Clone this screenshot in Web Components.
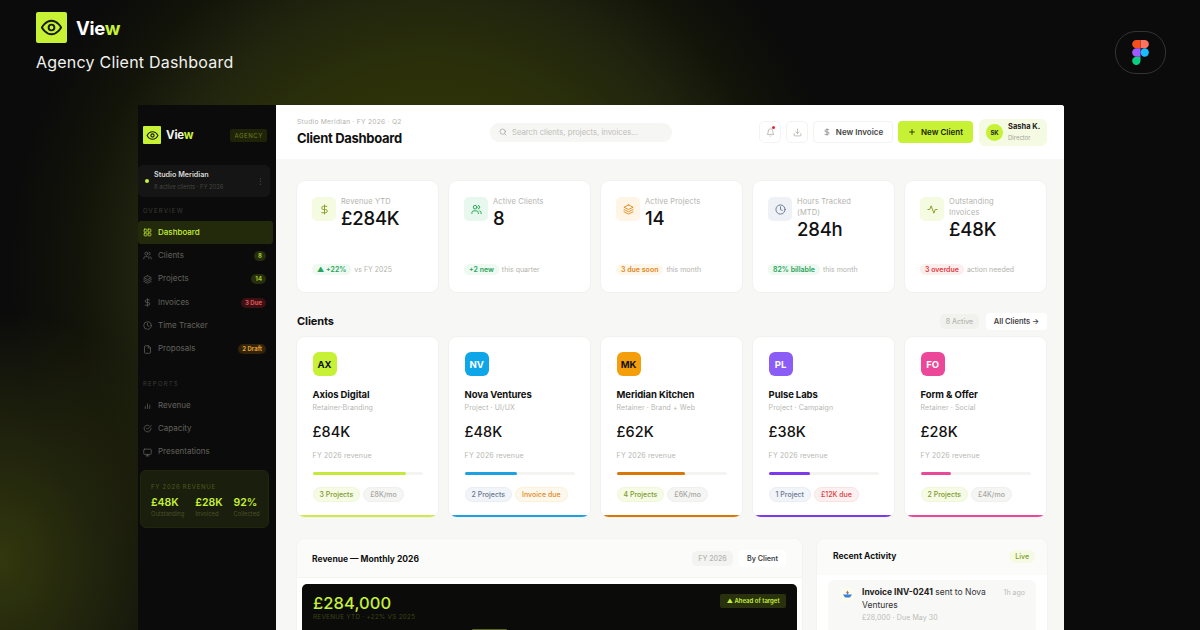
<!DOCTYPE html>
<html lang="en">
<head>
<meta charset="utf-8">
<title>View - Agency Client Dashboard</title>
<style>
  html, body { margin: 0; height: 100%; overflow: hidden; background: #0a0a0a; }
  body { font-family: "Inter", "Liberation Sans", sans-serif; }
</style>
</head>
<body>
<promo-stage>
  <app-sidebar slot="side"></app-sidebar>
  <top-bar slot="top"></top-bar>

  <section-row slot="body" kind="kpi">
    <kpi-card color="lime" icon="dollar" label="Revenue YTD" value="£284K" tag="▲ +22%" tone="green" note="vs FY 2025"></kpi-card>
    <kpi-card color="green" icon="users" label="Active Clients" value="8" tag="+2 new" tone="green" note="this quarter"></kpi-card>
    <kpi-card color="orange" icon="layers" label="Active Projects" value="14" tag="3 due soon" tone="orange" note="this month"></kpi-card>
    <kpi-card color="slate" icon="clock" label="Hours Tracked (MTD)" value="284h" tag="82% billable" tone="green" note="this month"></kpi-card>
    <kpi-card color="lime" icon="pulse" label="Outstanding Invoices" value="£48K" tag="3 overdue" tone="red" note="action needed"></kpi-card>
  </section-row>

  <clients-head slot="body"></clients-head>

  <section-row slot="body" kind="clients">
    <client-card initials="AX" bg="#c6f135" fg="#111" name="Axios Digital" sub="Retainer·Branding" value="£84K" bar="#c6e83a" stripe="#cdea4a" pct="85" a="3 Projects" at="lime" b="£8K/mo" bt="grey"></client-card>
    <client-card initials="NV" bg="#0ea5e9" fg="#fff" name="Nova Ventures" sub="Project · UI/UX" value="£48K" bar="#1da1e0" stripe="#1da1e0" pct="48" a="2 Projects" at="slate" b="Invoice due" bt="orange"></client-card>
    <client-card initials="MK" bg="#f59e0b" fg="#111" name="Meridian Kitchen" sub="Retainer · Brand + Web" value="£62K" bar="#d97706" stripe="#d97706" pct="62" a="4 Projects" at="lime" b="£6K/mo" bt="grey"></client-card>
    <client-card initials="PL" bg="#8b5cf6" fg="#fff" name="Pulse Labs" sub="Project · Campaign" value="£38K" bar="#7c3aed" stripe="#7c3aed" pct="38" a="1 Project" at="slate" b="£12K due" bt="red"></client-card>
    <client-card initials="FO" bg="#ec4899" fg="#fff" name="Form &amp; Offer" sub="Retainer · Social" value="£28K" bar="#ec4899" stripe="#ec4899" pct="28" a="2 Projects" at="lime" b="£4K/mo" bt="grey"></client-card>
  </section-row>

  <section-row slot="body" kind="panels">
    <revenue-panel></revenue-panel>
    <activity-panel></activity-panel>
  </section-row>
</promo-stage>

<script>
const ICONS = {
  eye: '<path d="M2 12s3.6-7 10-7 10 7 10 7-3.6 7-10 7-10-7-10-7z"/><circle cx="12" cy="12" r="3"/>',
  grid: '<rect x="3" y="3" width="7.5" height="7.5" rx="1.500"/><rect x="13.5" y="3" width="7.5" height="7.5" rx="1.500"/><rect x="3" y="13.5" width="7.5" height="7.5" rx="1.500"/><rect x="13.5" y="13.5" width="7.5" height="7.5" rx="1.500"/>',
  users: '<path d="M16 21v-2a4 4 0 0 0-4-4H6a4 4 0 0 0-4 4v2"/><circle cx="9" cy="7" r="4"/><path d="M22 21v-2a4 4 0 0 0-3-3.87"/><path d="M16 3.13a4 4 0 0 1 0 7.75"/>',
  layers: '<path d="M12 2 2 7l10 5 10-5-10-5z"/><path d="m2 12 10 5 10-5"/><path d="m2 17 10 5 10-5"/>',
  dollar: '<path d="M12 2v20"/><path d="M17 5H9.5a3.500 3.500 0 0 0 0 7h5a3.500 3.500 0 0 1 0 7H6"/>',
  clock: '<circle cx="12" cy="12" r="10"/><path d="M12 6v6l4 2"/>',
  file: '<path d="M14 2H6a2 2 0 0 0-2 2v16a2 2 0 0 0 2 2h12a2 2 0 0 0 2-2V8z"/><path d="M14 2v6h6"/>',
  bars: '<path d="M6 20v-5"/><path d="M12 20V8"/><path d="M18 20v-9"/>',
  check: '<path d="M21 11.1V12a9 9 0 1 1-5.3-8.2"/><path d="m9 11 3 3L22 4"/>',
  monitor: '<rect x="2" y="3" width="20" height="14" rx="2"/><path d="M8 21h8"/><path d="M12 17v4"/>',
  search: '<circle cx="11" cy="11" r="8"/><path d="m21 21-4.3-4.3"/>',
  bell: '<path d="M6 8a6 6 0 0 1 12 0c0 7 3 9 3 9H3s3-2 3-9"/><path d="M10.3 21a2 2 0 0 0 3.4 0"/>',
  download: '<path d="M21 15v4a2 2 0 0 1-2 2H5a2 2 0 0 1-2-2v-4"/><path d="m7 10 5 5 5-5"/><path d="M12 15V3"/>',
  plus: '<path d="M5 12h14"/><path d="M12 5v14"/>',
  pulse: '<path d="M22 12h-4l-3 8-6-16-3 8H2"/>',
  dots: '<circle cx="12" cy="5" r="1.600"/><circle cx="12" cy="12" r="1.600"/><circle cx="12" cy="19" r="1.600"/>'
};

function icon(name, size, width) {
  return `<svg width="${size}" height="${size}" viewBox="0 0 24 24" fill="none" stroke="currentColor" stroke-width="${width || 2}" stroke-linecap="round" stroke-linejoin="round">${ICONS[name]}</svg>`;
}

class Base extends HTMLElement {
  constructor() {
    super();
    this.attachShadow({ mode: "open" });
  }
  connectedCallback() {
    this.shadowRoot.innerHTML = `<style>:host, * { box-sizing: border-box; } ${this.styles()}</style>${this.markup()}`;
  }
  attr(name) {
    return this.getAttribute(name) || "";
  }
}

class PromoStage extends Base {
  styles() {
    return `
      :host {
        display: block; width: 1200px; height: 630px; overflow: hidden; position: relative; color: #fff;
        background:
          radial-gradient(210px 250px at 0 560px, rgba(52,58,14,.95), rgba(52,58,14,.4) 60%, transparent 100%),
          radial-gradient(circle 420px at 430px 270px, #343a0a 0, #2b300a 48%, #20240e 68%, #121309 85%, #0b0b0b 100%),
          #0b0b0b;
      }
      header { height: 105px; padding: 12px 34px 0 36px; display: flex; justify-content: space-between; }
      .logo { display: flex; align-items: center; gap: 9px; }
      .mark { width: 31px; height: 31px; border-radius: 2px; background: #c6f135; color: #171a05; display: flex; align-items: center; justify-content: center; }
      .word { font-size: 18.5px; font-weight: 700; letter-spacing: -.3px; }
      .word b { color: #c6f135; font-weight: 700; }
      .sub { margin-top: 9px; font-size: 16px; line-height: 21px; letter-spacing: .22px; color: #f1f1ee; }
      .figma { margin-top: 19px; width: 51px; height: 43px; border: 1px solid #333; border-radius: 21px; display: flex; align-items: center; justify-content: center; }
      .window { width: 926px; height: 560px; margin-left: 138px; display: flex; background: #f7f7f5; border-radius: 0 3px 0 0; overflow: hidden; }
      .main { flex: 1; min-width: 0; display: flex; flex-direction: column; }
      .body { padding: 22px 17px 0 21px; display: flex; flex-direction: column; }
    `;
  }
  markup() {
    return `
      <header>
        <div>
          <div class="logo">
            <div class="mark">${icon("eye", 23, 2)}</div>
            <div class="word">Vie<b>w</b></div>
          </div>
          <div class="sub">Agency Client Dashboard</div>
        </div>
        <div class="figma">
          <svg width="17" height="25" viewBox="0 0 38 57">
            <path fill="#19bcfe" d="M19 28.5a9.5 9.5 0 1 1 19 0 9.5 9.5 0 0 1-19 0z"/>
            <path fill="#0acf83" d="M0 47.5A9.5 9.5 0 0 1 9.5 38H19v9.5a9.5 9.5 0 1 1-19 0z"/>
            <path fill="#ff7262" d="M19 0v19h9.5a9.5 9.5 0 0 0 0-19z"/>
            <path fill="#f24e1e" d="M0 9.5A9.5 9.5 0 0 0 9.5 19H19V0H9.5A9.5 9.5 0 0 0 0 9.5z"/>
            <path fill="#a259ff" d="M0 28.5A9.5 9.5 0 0 0 9.5 38H19V19H9.5A9.5 9.5 0 0 0 0 28.5z"/>
          </svg>
        </div>
      </header>
      <div class="window">
        <slot name="side"></slot>
        <div class="main">
          <slot name="top"></slot>
          <div class="body"><slot name="body"></slot></div>
        </div>
      </div>
    `;
  }
}

class AppSidebar extends Base {
  styles() {
    return `
      :host { display: block; width: 138px; flex: none; height: 100%; background: #0b0b0b; color: #6d6d68; font-size: 8.5px; }
      .brand { height: 60px; padding: 0 9px 0 5px; display: flex; align-items: center; }
      .mark { width: 18px; height: 18px; border-radius: 1px; background: #c6f135; color: #171a05; display: flex; align-items: center; justify-content: center; }
      .word { margin-left: 5px; font-size: 11.5px; font-weight: 700; color: #f3f3f0; letter-spacing: -.2px; }
      .word b { color: #c6f135; font-weight: 700; }
      .chip { margin-left: auto; padding: 0 4px; height: 13px; line-height: 13px; font-size: 6px; letter-spacing: .6px; color: #6f8020; background: #1f2409; border-radius: 2px; }
      .org { height: 32px; width: 132px; border-radius: 5px; background: #151515; display: flex; align-items: center; padding: 0 5px 0 7px; }
      .dot { width: 4px; height: 4px; border-radius: 50%; background: #c6f135; margin-right: 5px; }
      .org div.t { flex: 1; }
      .org .n { font-size: 7.2px; font-weight: 600; color: #d9d9d5; line-height: 10px; }
      .org .s { font-size: 5.8px; color: #45453f; line-height: 10px; margin-top: 2px; }
      .org svg { color: #4a4a46; fill: currentColor; }
      .cap { font-size: 6px; letter-spacing: 1.2px; color: #3b3b37; padding-left: 5px; height: 8px; line-height: 8px; }
      .cap.one { margin-top: 10px; margin-bottom: 6px; }
      .cap.two { margin-top: 19px; margin-bottom: 6px; }
      .sum { margin: 6px 0 0 2px; width: 129px; height: 58px; border-radius: 6px; background: #1a1e0c; padding: 12px 0 0 10px; border: 1px solid #20250e; }
      .sum .h { font-size: 6px; letter-spacing: .75px; color: #4f5a1c; }
      .sum .row { display: flex; gap: 11px; margin-top: 6px; }
      .sum .v { font-size: 10.5px; font-weight: 600; color: #c6f135; line-height: 14px; }
      .sum .l { font-size: 5.8px; color: #4b5028; line-height: 7px; }
    `;
  }
  markup() {
    return `
      <div class="brand">
        <div class="mark">${icon("eye", 13, 2)}</div>
        <div class="word">Vie<b>w</b></div>
        <div class="chip">AGENCY</div>
      </div>
      <div class="org">
        <span class="dot"></span>
        <div class="t"><div class="n">Studio Meridian</div><div class="s">8 active clients · FY 2026</div></div>
        <svg width="9" height="9" viewBox="0 0 24 24">${ICONS.dots}</svg>
      </div>
      <div class="cap one">OVERVIEW</div>
      <nav-item icon="grid" active>Dashboard</nav-item>
      <nav-item icon="users" badge="8" tone="lime">Clients</nav-item>
      <nav-item icon="layers" badge="14" tone="lime">Projects</nav-item>
      <nav-item icon="dollar" badge="3 Due" tone="red">Invoices</nav-item>
      <nav-item icon="clock">Time Tracker</nav-item>
      <nav-item icon="file" badge="2 Draft" tone="amber">Proposals</nav-item>
      <div class="cap two">REPORTS</div>
      <nav-item icon="bars">Revenue</nav-item>
      <nav-item icon="check">Capacity</nav-item>
      <nav-item icon="monitor">Presentations</nav-item>
      <div class="sum">
        <div class="h">FY 2026 REVENUE</div>
        <div class="row">
          <div><div class="v">£48K</div><div class="l">Outstanding</div></div>
          <div><div class="v">£28K</div><div class="l">Invoiced</div></div>
          <div><div class="v">92%</div><div class="l">Collected</div></div>
        </div>
      </div>
    `;
  }
}

class NavItem extends Base {
  styles() {
    return `
      :host { display: flex; align-items: center; height: 23.3px; width: 135px; padding: 0 7px 0 5px; gap: 6px; color: #62625d; font-size: 8px; border-radius: 3px; }
      :host([active]) { background: #232a0b; color: #c6f135; font-weight: 500; }
      svg { flex: none; }
      .txt { flex: 1; padding-bottom: 1.500px; }
      .b { height: 10px; line-height: 10px; padding: 0 4px; border-radius: 5px; font-size: 6px; font-weight: 700; }
      .lime { background: #262e0e; color: #a5c62f; }
      .red { background: #3b1114; color: #e0555a; }
      .amber { background: #33230a; color: #e0a030; }
    `;
  }
  markup() {
    const badge = this.attr("badge");
    return `${icon(this.attr("icon"), 9, 2)}<span class="txt"><slot></slot></span>${badge ? `<span class="b ${this.attr("tone")}">${badge}</span>` : ""}`;
  }
}

class TopBar extends Base {
  styles() {
    return `
      :host { display: flex; align-items: center; height: 54px; flex: none; padding: 0 17px 0 21px; background: #fff; color: #111; }
      .title { width: 193px; }
      .crumb { font-size: 6.7px; letter-spacing: .25px; color: #b4b4ae; line-height: 9px; }
      h1 { margin: 3px 0 0; font-size: 13px; line-height: 16px; font-weight: 700; letter-spacing: -.3px; color: #111; }
      .search { width: 182px; height: 19px; border-radius: 9px; background: #f6f6f4; display: flex; align-items: center; gap: 5px; padding-left: 9px; font-size: 7.7px; color: #bdbdb8; }
      .search svg { color: #9b9b96; }
      .acts { margin-left: auto; display: flex; align-items: center; gap: 5px; }
      .sq { position: relative; width: 22px; height: 22px; border: 1px solid #f3f3f0; border-radius: 5px; display: flex; align-items: center; justify-content: center; color: #a2a29c; }
      .sq i { position: absolute; width: 3px; height: 3px; top: 4px; right: 5px; border-radius: 50%; background: #e5263a; }
      .btn { height: 22px; border-radius: 4px; display: flex; align-items: center; justify-content: center; gap: 5px; font-size: 8px; font-weight: 600; white-space: nowrap; }
      .ghost { width: 80px; border: 1px solid #f3f3f0; color: #444; }
      .ghost svg { color: #777; }
      .go { width: 75px; background: #c6f135; color: #1a1d05; }
      .user { display: flex; align-items: center; gap: 5px; width: 68px; height: 27px; background: #f5fae3; border-radius: 6px; padding: 0 7px; margin-left: 1px; }
      .av { width: 17px; height: 17px; flex: none; border-radius: 50%; background: #c6f135; color: #222; font-size: 6px; font-weight: 700; display: flex; align-items: center; justify-content: center; }
      .un { font-size: 7.5px; font-weight: 700; line-height: 10px; color: #222; white-space: nowrap; }
      .ur { font-size: 6px; color: #a1a49a; line-height: 9px; margin-top: 1px; }
    `;
  }
  markup() {
    return `
      <div class="title">
        <div class="crumb">Studio Meridian · FY 2026 · Q2</div>
        <h1>Client Dashboard</h1>
      </div>
      <div class="search">${icon("search", 8, 2)}<span>Search clients, projects, invoices...</span></div>
      <div class="acts">
        <div class="sq">${icon("bell", 9, 1.8)}<i></i></div>
        <div class="sq">${icon("download", 9, 1.8)}</div>
        <div class="btn ghost">${icon("dollar", 8, 2)}<span>New Invoice</span></div>
        <div class="btn go">${icon("plus", 8, 2.5)}<span>New Client</span></div>
        <div class="user"><div class="av">SK</div><div><div class="un">Sasha K.</div><div class="ur">Director</div></div></div>
      </div>
    `;
  }
}

class SectionRow extends Base {
  styles() {
    return `
      :host { display: grid; grid-template-columns: repeat(5, 141px); column-gap: 11px; }
      :host([kind="clients"]) { height: 180px; }
      :host([kind="panels"]) { grid-template-columns: 505px 230px; column-gap: 15px; margin-top: 22px; }
    `;
  }
  markup() {
    return `<slot></slot>`;
  }
}

class KpiCard extends Base {
  styles() {
    return `
      :host { display: flex; flex-direction: column; height: 111px; background: #fff; border-radius: 8px; padding: 16px 15px 0; box-shadow: 0 0 0 1px #f1f1ee; color: #111; }
      .top { display: flex; gap: 5px; flex: 1; }
      .ic { width: 24px; height: 24px; border-radius: 5px; flex: none; display: flex; align-items: center; justify-content: center; }
      .lime { background: #f5fbe1; color: #7f9a20; }
      .green { background: #e9f8ef; color: #16a34a; }
      .orange { background: #fef5e6; color: #e08a1e; }
      .slate { background: #eef1f6; color: #64748b; }
      .txt { margin-top: -1px; }
      .lb { max-width: 70px; font-size: 7.5px; line-height: 11px; letter-spacing: .15px; color: #b3b3ad; }
      .v { font-size: 18.5px; line-height: 23px; font-weight: 500; color: #111; letter-spacing: -.2px; }
      .ft { display: flex; align-items: center; gap: 3px; height: 11px; margin-bottom: 17px; font-size: 7px; color: #b3b3ad; }
      .tag { height: 11px; line-height: 11px; padding: 0 5px; border-radius: 6px; font-size: 7px; font-weight: 600; }
      .tag.green { background: #edf9f1; color: #2aa35a; }
      .tag.orange { background: #fef6e9; color: #e0861c; }
      .tag.red { background: #fdeeee; color: #e03a3e; }
    `;
  }
  markup() {
    return `
      <div class="top">
        <div class="ic ${this.attr("color")}">${icon(this.attr("icon"), 11, 2)}</div>
        <div class="txt"><div class="lb">${this.attr("label")}</div><div class="v">${this.attr("value")}</div></div>
      </div>
      <div class="ft"><span class="tag ${this.attr("tone")}">${this.attr("tag")}</span><span>${this.attr("note")}</span></div>
    `;
  }
}

class ClientsHead extends Base {
  styles() {
    return `
      :host { display: flex; align-items: center; height: 18px; margin: 20px 0 7px; color: #111; }
      h2 { margin: 0; font-size: 11px; font-weight: 700; letter-spacing: -.1px; flex: 1; }
      .a { width: 39px; text-align: center; height: 15px; line-height: 15px; border-radius: 5px; background: #f1f1ee; color: #b5b5af; font-size: 7px; font-weight: 500; }
      .b { width: 61px; text-align: center; height: 17px; line-height: 17px; border-radius: 4px; margin-left: 7px; background: #fff; color: #444; font-size: 7.5px; font-weight: 600; }
    `;
  }
  markup() {
    return `<h2>Clients</h2><span class="a">8 Active</span><span class="b">All Clients →</span>`;
  }
}

class MiniChip extends Base {
  styles() {
    return `
      :host { display: inline-block; height: 15px; line-height: 13px; padding: 0 6px; border-radius: 8px; font-size: 7px; font-weight: 500; border: 1px solid; white-space: nowrap; }
      :host([tone="lime"]) { background: #f6fbe6; border-color: #f0f7d8; color: #7d9a2a; }
      :host([tone="grey"]) { background: #f5f5f3; border-color: #efefec; color: #a8a8a3; }
      :host([tone="slate"]) { background: #f1f4f9; border-color: #e9edf4; color: #69788f; }
      :host([tone="orange"]) { background: #fef8ec; border-color: #fcf0d9; color: #e08a1e; }
      :host([tone="red"]) { background: #fdf0f0; border-color: #fae2e2; color: #dc3b3f; }
    `;
  }
  markup() {
    return `<slot></slot>`;
  }
}

class ClientCard extends Base {
  styles() {
    return `
      :host { display: flex; flex-direction: column; height: 180px; border-radius: 8px; padding: 15px 15px 0 15.6px; background: linear-gradient(to top, var(--stripe) 2px, #fff 2px); color: #111; box-shadow: 0 0 0 1px #f1f1ee; }
      .av { width: 24px; height: 24px; border-radius: 6px; display: flex; align-items: center; justify-content: center; font-size: 9.5px; font-weight: 700; }
      .n { margin-top: 12px; font-size: 9.5px; line-height: 13px; font-weight: 700; letter-spacing: -.1px; white-space: nowrap; }
      .s { margin-top: 1px; font-size: 7px; line-height: 11px; letter-spacing: .1px; color: #b7b7b1; white-space: nowrap; }
      .v { margin-top: 9px; font-size: 14.5px; line-height: 20px; font-weight: 500; }
      .f { margin-top: 9px; font-size: 7px; line-height: 10px; letter-spacing: .15px; color: #b7b7b1; }
      .track { margin-top: 11px; width: 110px; height: 3px; border-radius: 2px; background: #f4f4f2; }
      .track i { display: block; height: 100%; border-radius: 2px; }
      .chips { margin-top: 12px; display: flex; gap: 3px; }
    `;
  }
  markup() {
    this.style.setProperty("--stripe", this.attr("stripe"));
    return `
      <div class="av" style="background:${this.attr("bg")};color:${this.attr("fg")}">${this.attr("initials")}</div>
      <div class="n">${this.attr("name").replace("&", "&amp;")}</div>
      <div class="s">${this.attr("sub")}</div>
      <div class="v">${this.attr("value")}</div>
      <div class="f">FY 2026 revenue</div>
      <div class="track"><i style="width:${this.attr("pct")}%;background:${this.attr("bar")}"></i></div>
      <div class="chips"><mini-chip tone="${this.attr("at")}">${this.attr("a")}</mini-chip><mini-chip tone="${this.attr("bt")}">${this.attr("b")}</mini-chip></div>
    `;
  }
}

class RevenuePanel extends Base {
  styles() {
    return `
      :host { display: block; height: 200px; background: #fff; border-radius: 8px 8px 0 0; box-shadow: 0 0 0 1px #f3f3f0; color: #111; }
      .hd { height: 39px; background: #fbfbf9; display: flex; align-items: center; padding: 0 16px 0 15px; border-radius: 8px 8px 0 0; border-bottom: 1px solid #f3f3f0; }
      h3 { margin: 0; flex: 1; font-size: 8.5px; font-weight: 700; padding-top: 1px; }
      .a { width: 41px; text-align: center; height: 15px; line-height: 15px; border-radius: 5px; background: #f3f3f1; color: #b5b5af; font-size: 7px; font-weight: 500; }
      .b { width: 47px; text-align: center; height: 17px; line-height: 17px; border-radius: 4px; margin-left: 6px; background: #fff; color: #444; font-size: 7.2px; font-weight: 600; }
      .dark { position: relative; margin: 6px 5px 0; height: 150px; background: #0b0b0a; border-radius: 5px; padding: 9px 11px; display: flex; justify-content: space-between; }
      .big { font-size: 16.5px; line-height: 20px; font-weight: 500; color: #c6f135; letter-spacing: .1px; }
      .sm { margin-top: 0; font-size: 6.3px; line-height: 8px; letter-spacing: .3px; color: #3e4417; }
      .ahead { height: 14px; line-height: 14px; margin-top: 1px; padding: 0 6.500px; border-radius: 2px; background: #2a310f; color: #c6f135; font-size: 6px; font-weight: 600; }
      .bar { position: absolute; top: 45px; left: 170px; width: 35px; height: 60px; background: #5b6620; border-radius: 1px; }
    `;
  }
  markup() {
    return `
      <div class="hd"><h3>Revenue — Monthly 2026</h3><span class="a">FY 2026</span><span class="b">By Client</span></div>
      <div class="dark">
        <div><div class="big">£284,000</div><div class="sm">REVENUE YTD · +22% VS 2025</div></div>
        <div class="ahead">▲ Ahead of target</div>
        <div class="bar"></div>
      </div>
    `;
  }
}

class ActivityPanel extends Base {
  styles() {
    return `
      :host { display: block; height: 200px; background: #fff; border-radius: 8px 8px 0 0; box-shadow: 0 0 0 1px #f3f3f0; color: #111; }
      .hd { height: 36px; background: #fbfbf9; display: flex; align-items: center; justify-content: space-between; padding: 0 12px 2px 16px; border-radius: 8px 8px 0 0; }
      h3 { margin: 0; font-size: 8.5px; font-weight: 700; }
      .live { height: 13px; line-height: 13px; padding: 0 6px; border-radius: 7px; background: #f5fae3; color: #7d9a2a; font-size: 7px; font-weight: 500; }
      .item { margin: 5px 11px 0; height: 60px; background: #f8f8f6; border-radius: 7px; padding: 6px 11px 0 12px; display: flex; gap: 7px; }
      .dot { width: 15px; height: 15px; margin-top: 1px; flex: none; }
      .tx { flex: 1; font-size: 8.5px; line-height: 13px; color: #333; }
      .tx b { font-weight: 700; color: #222; }
      .sm { font-size: 7px; line-height: 11px; color: #bcbcb6; letter-spacing: .1px; }
      .tm { font-size: 7px; line-height: 13px; color: #bcbcb6; white-space: nowrap; }
    `;
  }
  markup() {
    return `
      <div class="hd"><h3>Recent Activity</h3><span class="live">Live</span></div>
      <div class="item">
        <svg class="dot" viewBox="0 0 15 15"><circle cx="7.500" cy="7.500" r="7.500" fill="#fbfbef"/><path fill="#d9603f" d="M7.500 3.500 9 6H6z"/><path fill="#3b82d6" d="M3 7.500h9L10 10.500H5z"/><rect x="6.800" y="6" width="1.400" height="1.500" fill="#3b82d6"/></svg>
        <div class="tx"><b>Invoice INV-0241</b> sent to Nova Ventures<div class="sm">£28,000 · Due May 30</div></div>
        <div class="tm">1h ago</div>
      </div>
    `;
  }
}

customElements.define("nav-item", NavItem);
customElements.define("mini-chip", MiniChip);
customElements.define("app-sidebar", AppSidebar);
customElements.define("top-bar", TopBar);
customElements.define("section-row", SectionRow);
customElements.define("kpi-card", KpiCard);
customElements.define("clients-head", ClientsHead);
customElements.define("client-card", ClientCard);
customElements.define("revenue-panel", RevenuePanel);
customElements.define("activity-panel", ActivityPanel);
customElements.define("promo-stage", PromoStage);
</script>
</body>
</html>
